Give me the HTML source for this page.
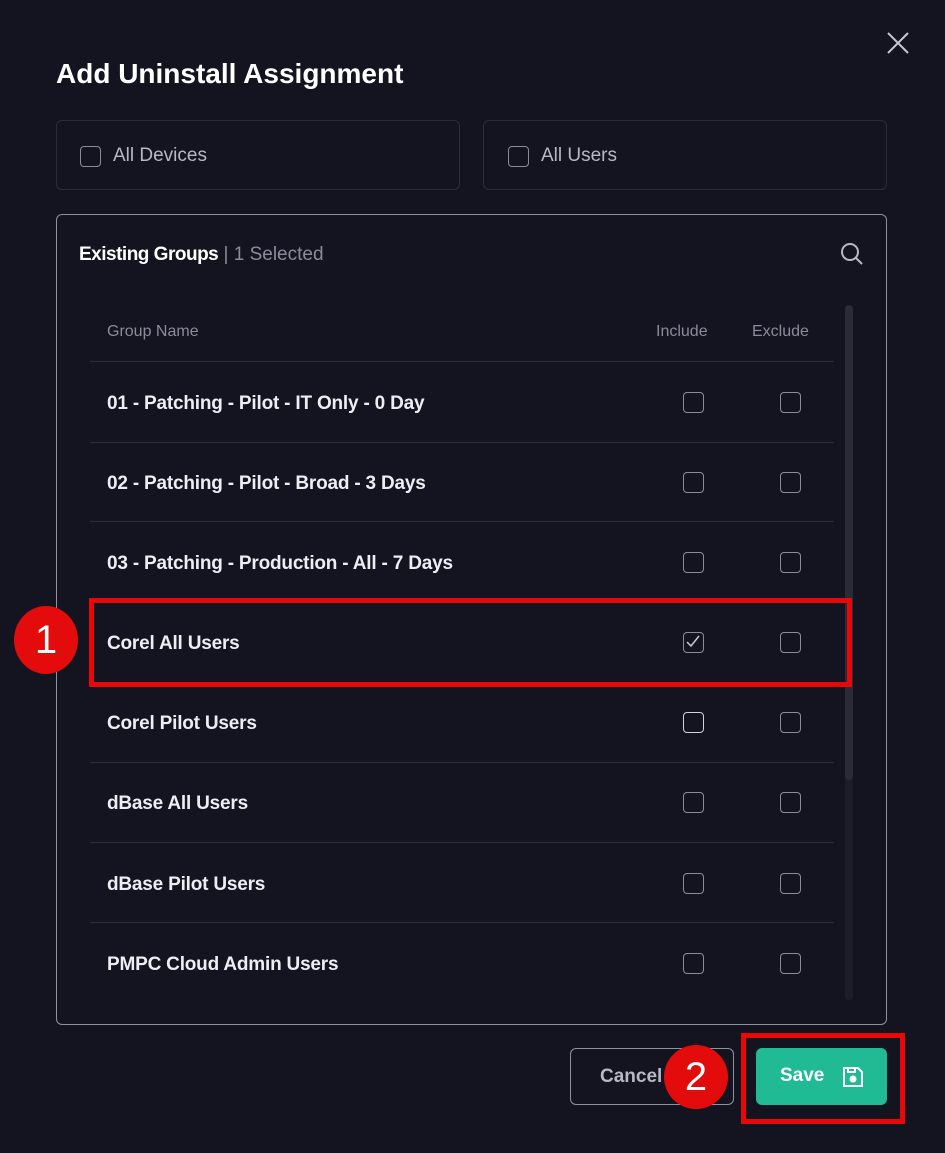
<!DOCTYPE html><html><head><style>
*{margin:0;padding:0;box-sizing:border-box}
body{width:945px;height:1153px;background:#13141f;font-family:"Liberation Sans",sans-serif;position:relative;overflow:hidden;color:#fff}
.a{position:absolute}
.cb{position:absolute;width:21px;height:21px;border:1.5px solid #8a8c9c;border-radius:4px}
.row{position:absolute;left:107px;font-size:19px;color:#eceef4;font-weight:bold;letter-spacing:-0.2px}
.sep{position:absolute;left:90px;width:744px;height:1px;background:#2c2e3c}
</style></head><body>
<svg class="a" style="left:886px;top:31px" width="24" height="24" viewBox="0 0 24 24" stroke="#c8c9d2" stroke-width="2"><path d="M2 2l20 20M22 2L2 22"/></svg>
<div class="a" style="left:56px;top:58px;font-size:28px;font-weight:bold;letter-spacing:0px">Add Uninstall Assignment</div>
<div class="a" style="left:56px;top:120px;width:404px;height:70px;border:1.5px solid #2a2c3a;border-radius:6px"></div>
<div class="a" style="left:483px;top:120px;width:404px;height:70px;border:1.5px solid #2a2c3a;border-radius:6px"></div>
<div class="cb" style="left:80px;top:146px"></div><div class="a" style="left:113px;top:145px;font-size:19px;color:#b6b8c6">All Devices</div>
<div class="cb" style="left:508px;top:146px"></div><div class="a" style="left:541px;top:145px;font-size:19px;color:#b6b8c6">All Users</div>
<div class="a" style="left:56px;top:214px;width:831px;height:811px;border:1.5px solid #8f91a3;border-radius:6px"></div>
<div class="a" style="left:79px;top:244px;font-size:19px"><b style="letter-spacing:-0.5px">Existing Groups</b><span style="color:#8a8c9c"> | 1 Selected</span></div>
<svg class="a" style="left:840px;top:242px" width="24" height="24" viewBox="0 0 24 24" fill="none" stroke="#b6b8c6" stroke-width="2"><circle cx="10" cy="10" r="8"/><path d="M16 16l6 6"/></svg>
<div class="a" style="left:107px;top:323px;font-size:16px;color:#8a8c9c">Group Name</div>
<div class="a" style="left:656px;top:323px;font-size:16px;color:#8a8c9c">Include</div>
<div class="a" style="left:752px;top:323px;font-size:16px;color:#8a8c9c">Exclude</div>
<div class="a" style="left:845px;top:305px;width:8px;height:695px;background:#1c1d29;border-radius:4px"></div>
<div class="a" style="left:845px;top:305px;width:8px;height:475px;background:#2a2b37;border-radius:4px"></div>
<div class="sep" style="top:361px"></div><div class="sep" style="top:442px"></div><div class="sep" style="top:521px"></div><div class="sep" style="top:682px"></div><div class="sep" style="top:762px"></div><div class="sep" style="top:842px"></div><div class="sep" style="top:922px"></div>
<div class="row" style="top:393px">01 - Patching - Pilot - IT Only - 0 Day</div>
<div class="row" style="top:473px">02 - Patching - Pilot - Broad - 3 Days</div>
<div class="row" style="top:553px">03 - Patching - Production - All - 7 Days</div>
<div class="row" style="top:633px">Corel All Users</div>
<div class="row" style="top:713px">Corel Pilot Users</div>
<div class="row" style="top:793px">dBase All Users</div>
<div class="row" style="top:874px">dBase Pilot Users</div>
<div class="row" style="top:954px">PMPC Cloud Admin Users</div>
<div class="cb" style="left:683px;top:392px"></div><div class="cb" style="left:780px;top:392px"></div>
<div class="cb" style="left:683px;top:472px"></div><div class="cb" style="left:780px;top:472px"></div>
<div class="cb" style="left:683px;top:552px"></div><div class="cb" style="left:780px;top:552px"></div>
<div class="cb" style="left:683px;top:632px"><svg width="18" height="18" style="position:absolute;left:0;top:0"><path d="M3 9l4 4 8-10" stroke="#c8c9d2" stroke-width="1.5" fill="none"/></svg></div><div class="cb" style="left:780px;top:632px"></div>
<div class="cb" style="left:683px;top:712px;border-color:#d0d2dc"></div><div class="cb" style="left:780px;top:712px"></div>
<div class="cb" style="left:683px;top:792px"></div><div class="cb" style="left:780px;top:792px"></div>
<div class="cb" style="left:683px;top:873px"></div><div class="cb" style="left:780px;top:873px"></div>
<div class="cb" style="left:683px;top:953px"></div><div class="cb" style="left:780px;top:953px"></div>
<div class="a" style="left:89px;top:598px;width:763px;height:89px;border:5px solid #e8080a"></div>
<div class="a" style="left:14px;top:606px;width:64px;height:68px;border-radius:50%;background:#e30b0b;color:#fff;font-size:40px;text-align:center;line-height:68px">1</div>
<div class="a" style="left:570px;top:1048px;width:164px;height:57px;border:1.5px solid #8f91a3;border-radius:6px;font-size:19px;font-weight:bold;color:#b6b8c6;padding:17px 0 0 29px">Cancel</div>
<div class="a" style="left:741px;top:1033px;width:164px;height:91px;border:5px solid #e8080a"></div>
<div class="a" style="left:756px;top:1048px;width:131px;height:57px;background:#20ba95;border-radius:6px;font-size:19px;font-weight:bold;color:#fff;padding:17px 0 0 24px">Save</div>
<svg class="a" style="left:842px;top:1066px" width="22" height="22" viewBox="0 0 22 22" fill="none" stroke="#fff" stroke-width="2"><path d="M2 2h14l4 4v14H2z"/><circle cx="11" cy="13" r="2.5" fill="#fff"/><path d="M6 2v4h7V2"/></svg>
<div class="a" style="left:664px;top:1045px;width:64px;height:64px;border-radius:50%;background:#e30b0b;color:#fff;font-size:40px;text-align:center;line-height:64px">2</div>
</body></html>
